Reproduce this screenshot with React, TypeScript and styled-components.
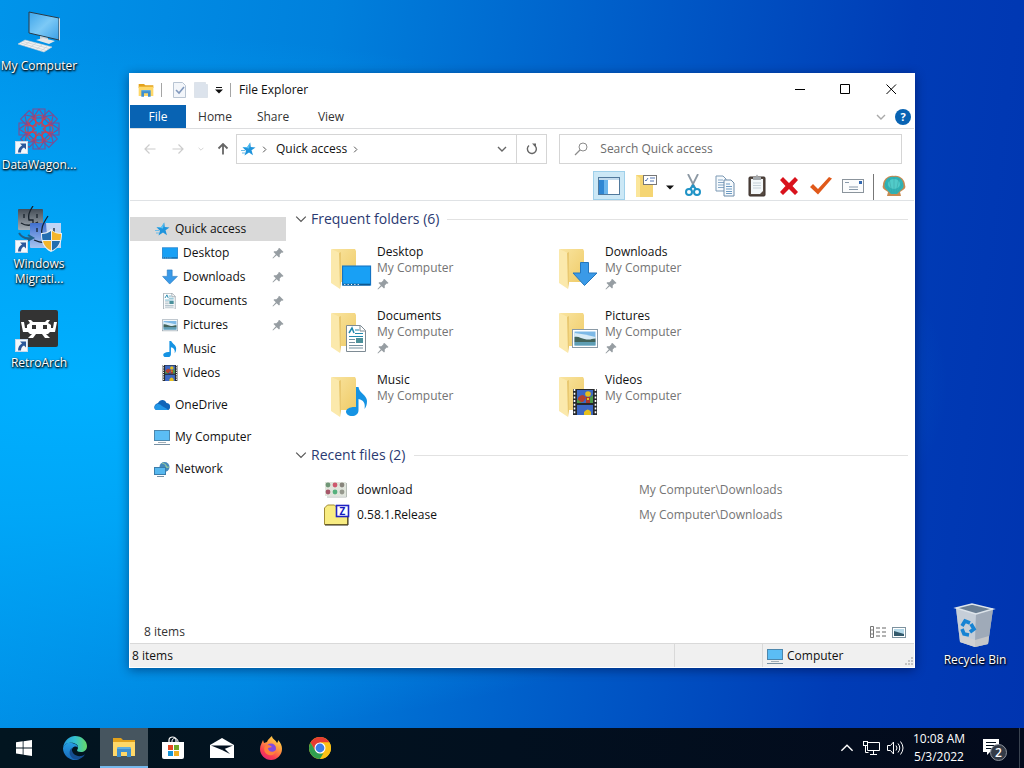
import { useState } from "react";
import type { ReactNode } from "react";
import styled, { createGlobalStyle } from "styled-components";

const GlobalStyle = createGlobalStyle`
    * {
        box-sizing: border-box;
    }
    body {
        margin: 0;
        font-family: "Open Sans", "Noto Sans", sans-serif;
        font-size: 12px;
        line-height: 16px;
        color: #111;
    }
    button, input {
        font: inherit;
        color: inherit;
    }
    button {
        border: 0;
        padding: 0;
        background: none;
    }
    svg {
        display: block;
        flex: none;
    }
`;

const Screen = styled.div`
    display: flex;
    flex-direction: column;
    height: 100vh;
    overflow: hidden;
    background:
        radial-gradient(ellipse at 8% 50%, #00b0ff 0%, rgba(0, 170, 250, 0.85) 25%, rgba(0, 120, 220, 0) 65%),
        linear-gradient(97deg, #0094ea 0%, #0080dc 30%, #0058c6 60%, #003cb6 82%, #0034b0 100%);
`;

const Desktop = styled.main`
    position: relative;
    flex: 1;
    display: flex;
    justify-content: space-between;
    min-height: 0;
`;

const IconColumn = styled.div<{ $end?: boolean }>`
    display: flex;
    flex-direction: column;
    justify-content: ${p => (p.$end ? "flex-end" : "flex-start")};
    padding: ${p => (p.$end ? "0 10px 35px 0" : "0")};
`;

const Shortcut = styled.button`
    display: flex;
    flex-direction: column;
    align-items: center;
    gap: 2px;
    width: 78px;
    height: 99px;
    padding-top: 8px;
    color: #fff;
    line-height: 15px;
    text-shadow: 1px 1px 2px #000, 0 1px 2px #000;
    span {
        white-space: pre-line;
    }
`;

const Window = styled.section`
    position: absolute;
    top: 73px;
    right: 109px;
    bottom: 60px;
    left: 129px;
    display: flex;
    flex-direction: column;
    background: #fff;
    border: 1px solid transparent;
    box-shadow: 0 2px 10px rgba(0, 0, 40, 0.45);
`;

const TitleBar = styled.header`
    display: flex;
    align-items: center;
    height: 31px;
    padding-left: 8px;
    h1 {
        flex: 1;
        margin: 0;
        padding-left: 3px;
        font-size: 12px;
        font-weight: 400;
    }
`;

const QuickButton = styled.button<{ $width: number }>`
    display: flex;
    justify-content: center;
    width: ${p => p.$width}px;
`;

const Divider = styled.span<{ $height: number; $gap: number; $color: string }>`
    width: 1px;
    height: ${p => p.$height}px;
    margin: 0 ${p => p.$gap}px;
    background: ${p => p.$color};
`;

const ControlButton = styled.button`
    display: flex;
    align-items: center;
    justify-content: center;
    width: 46px;
    height: 30px;
`;

const Ribbon = styled.nav`
    display: flex;
    align-items: center;
    height: 24px;
    padding-right: 3px;
    border-bottom: 1px solid #dcdddf;
`;

const RibbonTab = styled.button<{ $file?: boolean }>`
    width: ${p => (p.$file ? 56 : 58)}px;
    height: 23px;
    background: ${p => (p.$file ? "#0863b3" : "transparent")};
    color: ${p => (p.$file ? "#fff" : "#333")};
`;

const RibbonEnd = styled.div`
    display: flex;
    align-items: center;
    gap: 9px;
    margin-left: auto;
`;

const AddressRow = styled.div`
    display: flex;
    height: 35px;
    padding: 5px 12px 0 6px;
`;

const NavButton = styled.button<{ $width: number }>`
    display: flex;
    align-items: center;
    justify-content: center;
    width: ${p => p.$width}px;
`;

const AddressBox = styled.div`
    flex: 15 1 0;
    display: flex;
    align-items: center;
    border: 1px solid #d5d5d5;
    padding-left: 3px;
`;

const Crumb = styled.button`
    padding: 0 8px 0 5px;
`;

const Dropdown = styled.button`
    display: flex;
    justify-content: center;
    width: 28px;
    margin-left: auto;
`;

const Refresh = styled.button`
    display: flex;
    align-items: center;
    justify-content: center;
    align-self: stretch;
    width: 30px;
    border-left: 1px solid #d5d5d5;
`;

const SearchBox = styled.label`
    flex: 16 1 0;
    display: flex;
    align-items: center;
    gap: 12px;
    margin-left: 12px;
    padding-left: 14px;
    border: 1px solid #d5d5d5;
    input {
        flex: 1;
        min-width: 0;
        padding: 0;
        border: 0;
        outline: 0;
        background: none;
    }
    input::placeholder {
        color: #6d6d6d;
        opacity: 1;
    }
`;

const Toolbar = styled.div`
    display: flex;
    align-items: flex-end;
    justify-content: flex-end;
    height: 37px;
    padding-right: 4px;
    border-bottom: 1px solid #dfe2e5;
`;

const ToolButton = styled.button<{ $active?: boolean; $narrow?: boolean }>`
    display: flex;
    align-items: center;
    justify-content: center;
    width: ${p => (p.$narrow ? 15 : 32)}px;
    height: 29px;
    margin-right: ${p => (p.$active ? 5 : 0)}px;
    background: ${p => (p.$active ? "#cce8f6" : "transparent")};
    border: ${p => (p.$active ? "1px solid #9fd0ea" : "0")};
`;

const Body = styled.div`
    flex: 1;
    display: flex;
    min-height: 0;
`;

const SideNav = styled.nav`
    width: 156px;
    padding-top: 16px;
`;

const SideGroup = styled.div`
    margin-bottom: 8px;
`;

const SideItem = styled.a<{ $child?: boolean; $selected?: boolean }>`
    display: flex;
    align-items: center;
    gap: 5px;
    height: 24px;
    padding: 0 2px 0 ${p => (p.$child ? 32 : 24)}px;
    background: ${p => (p.$selected ? "#d9d9d9" : "transparent")};
    color: inherit;
    text-decoration: none;
    span {
        flex: 1;
        white-space: nowrap;
    }
`;

const Content = styled.div`
    flex: 1;
    min-width: 0;
    padding: 6px 6px 0 9px;
    overflow: hidden;
`;

const SectionTitle = styled.h2`
    display: flex;
    align-items: center;
    gap: 8px;
    height: 24px;
    margin: 0;
    font-size: 14px;
    font-weight: 400;
    color: #2b3a72;
    button {
        display: flex;
        align-items: center;
        gap: 4px;
    }
    &::after {
        content: "";
        flex: 1;
        height: 1px;
        background: #e2e2e2;
    }
`;

const FolderGrid = styled.div`
    display: grid;
    grid-template-columns: repeat(auto-fill, 228px);
    grid-auto-rows: 64px;
    padding: 13px 0 0 32px;
    margin-bottom: 7px;
`;

const FolderTile = styled.button`
    display: flex;
    align-items: flex-start;
    gap: 2px;
    text-align: left;
`;

const FolderText = styled.span`
    display: flex;
    flex-direction: column;
    small {
        font-size: 12px;
        color: #747474;
    }
    svg {
        margin-top: 2px;
    }
`;

const RecentTable = styled.table`
    width: 100%;
    margin-top: 10px;
    border-collapse: collapse;
    table-layout: fixed;
    tr {
        height: 25px;
    }
    td {
        padding: 0;
        color: #747474;
    }
    td:first-child {
        width: 344px;
        padding-left: 29px;
        color: #111;
    }
`;

const FileName = styled.span`
    display: flex;
    align-items: center;
    gap: 7px;
`;

const InfoBar = styled.div`
    display: flex;
    align-items: center;
    gap: 6px;
    height: 24px;
    padding: 2px 8px 0 14px;
    color: #333;
    span {
        flex: 1;
    }
`;

const StatusBar = styled.footer`
    display: flex;
    height: 24px;
    background: #f0f0f0;
    border-top: 1px solid #d9d9d9;
`;

const StatusCell = styled.div<{ $width?: number }>`
    flex: ${p => (p.$width ? `0 0 ${p.$width}px` : "1")};
    display: flex;
    align-items: center;
    gap: 4px;
    padding-left: ${p => (p.$width ? 4 : 2)}px;
    border-right: 1px solid #d9d9d9;
    span {
        flex: 1;
    }
    &:last-child {
        align-items: center;
        border-right: 0;
    }
`;

const Grip = styled.span`
    && {
        flex: none;
        align-self: flex-end;
        padding: 0 1px 1px 0;
    }
`;

const Taskbar = styled.footer`
    display: flex;
    align-items: stretch;
    gap: 1px;
    height: 40px;
    background: linear-gradient(90deg, #021520, #02101f 50%, #030a1c);
    color: #fff;
`;

const TaskButton = styled.button<{ $active?: boolean; $start?: boolean }>`
    display: flex;
    align-items: center;
    justify-content: center;
    width: ${p => (p.$start ? 50 : 48)}px;
    padding-right: ${p => (p.$start ? 2 : 0)}px;
    background: ${p => (p.$active ? "#46555f" : "transparent")};
    border-bottom: ${p => (p.$active ? "2px solid #76b9ed" : "0")};
`;

const Tray = styled.div`
    display: flex;
    align-items: center;
    gap: 4px;
    margin-left: auto;
`;

const TrayButton = styled.button<{ $width: number }>`
    display: flex;
    align-items: center;
    justify-content: center;
    width: ${p => p.$width}px;
    height: 40px;
`;

const Clock = styled.time`
    display: flex;
    flex-direction: column;
    width: 60px;
    line-height: 18px;
    text-align: center;
    white-space: nowrap;
`;

const ShowDesktop = styled.button`
    width: 5px;
    height: 40px;
    border-left: 1px solid #3a4350;
`;

/* ---------- icons ---------- */

const Arrow = () => (
    <g>
        <rect x="0.5" y="34.5" width="12" height="12" fill="#f4f8fc" stroke="#c7d8ea" />
        <path d="M5 36.5h6v6l-2-2c-2 1-3 2.500-3 5H3c0-3.500 1.500-5.500 4-7z" fill="#2b579a" />
    </g>
);

const BigComputer = () => (
    <svg width="48" height="48" viewBox="0 0 48 48">
        <defs>
            <linearGradient id="screen" x1="0" y1="0" x2="1" y2="1">
                <stop offset="0" stopColor="#3da4ea" />
                <stop offset="0.5" stopColor="#7cc9f6" />
                <stop offset="1" stopColor="#3a9fe6" />
            </linearGradient>
        </defs>
        <path d="M14 4l30 6v22l-30-7z" fill="url(#screen)" stroke="#2a3b48" />
        <path d="M44 10l1 .5v22l-1-.5z" fill="#d7dde2" />
        <path d="M25 28l8 2v3h-8z" fill="#c8ced3" />
        <path d="M21 32l7-2 12 3-6 3z" fill="#e3e6e8" />
        <path d="M10 32l27 7-8 5L3 36z" fill="#f2f3f4" stroke="#c9cfd3" strokeWidth="0.6" />
        <path d="M8 33.500l26 7M6 35l25 7.500M15 33.500l-6 4M21 35l-6 4.500M27 37l-6 4.500M32 38.500l-6 4.500" stroke="#ccd2d6" strokeWidth="0.8" />
    </svg>
);

const DataWagon = () => (
    <svg width="48" height="48" viewBox="0 0 48 48">
        <g fill="none" stroke="#7a4f93" strokeWidth="1.1">
            {[0, 45, 90, 135, 180, 225, 270, 315].map(a => (
                <g key={a} transform={`rotate(${a} 24 22)`}>
                    <path d="M18 2h12v9H18zM18 11l6-9 6 9" />
                    <path d="M16 9l8 9 8-9" stroke="#a84c70" />
                    <circle cx="24" cy="12" r="4" stroke="#d0404c" />
                </g>
            ))}
        </g>
        <Arrow />
    </svg>
);

const Migration = () => (
    <svg width="48" height="48" viewBox="0 0 48 48">
        <defs>
            <linearGradient id="gray" x1="0" y1="0" x2="0" y2="1">
                <stop offset="0" stopColor="#444d57" />
                <stop offset="1" stopColor="#a5adb5" />
            </linearGradient>
            <linearGradient id="finder" x1="0" y1="0" x2="0" y2="1">
                <stop offset="0" stopColor="#3f6fd0" />
                <stop offset="1" stopColor="#a9c4f0" />
            </linearGradient>
        </defs>
        <rect x="3" y="3" width="25" height="21" rx="1" fill="url(#gray)" />
        <path d="M9 8v4M22 8v4M6 17q8 5 17-1M18 0c-4 6-5 9-4 14h4v8" fill="none" stroke="#17212b" strokeWidth="1.3" />
        <rect x="15" y="17" width="31" height="25" rx="1" fill="url(#finder)" />
        <path d="M31 17h15v25H33z" fill="#bfd4f5" />
        <path d="M22 22v4M39 22v4M19 34q11 5 17 0M33 10c-6 9-7 13-6 19h5v13" fill="none" stroke="#152334" strokeWidth="1.3" />
        <path d="M4 27c3 5 7 6 12 5M13 29l5 3-6 3" fill="none" stroke="#20628a" strokeWidth="2" />
        <path d="M36 23c3 3 6 4 11 4 0 9-2 15-11 19-8-4-10-10-10-19 4 0 7-1 10-4z" fill="#e9f0f5" />
        <path d="M36 25v9h-8.500c-.5-2-.5-4-.5-6 4 0 6-1 9-3zM37 35h8c-1 4-3 7-8 9.500z" fill="#236eb0" />
        <path d="M37 25v9h8.500c.5-2 .5-4 .5-6-4 0-6-1-9-3zM36 35h-8c1 4 3 7 8 9.500z" fill="#f4b52c" />
        <Arrow />
    </svg>
);

const RetroArch = () => (
    <svg width="48" height="48" viewBox="0 0 48 48">
        <rect x="5" y="5" width="38" height="37" rx="2" fill="#333" />
        <path
            d="M13 15h3l2 2h12l2-2h3l-2 3 3 2v3h2l1-6h3l-2 10h-5l-2 2h-2l4 4h-5l-3-4h-6l-3 4h-5l4-4h-2l-2-2H8L6 17h3l1 6h2v-3l3-2z"
            fill="#fff"
        />
        <path d="M17 20h4v4h-4zM28 20h4v4h-4z" fill="#333" />
        <Arrow />
    </svg>
);

const RecycleBin = () => (
    <svg width="48" height="48" viewBox="0 0 48 48">
        <path d="M5 6l16-4 21 5-5 35-13 3-15-5z" fill="#a9b7c6" />
        <path d="M5 6l20 6-1 33-15-5z" fill="#c5ced8" />
        <path d="M25 12l17-5-5 35-13 3z" fill="#9faab8" />
        <path d="M5 6l16-4 21 5-17 5z" fill="#6b7f93" stroke="#dde4ea" strokeWidth="1.4" />
        <path d="M9 33l15 5 14-4-1 8-13 3-15-5z" fill="#d6d3d0" opacity="0.7" />
        <g fill="none" stroke="#1683d3" strokeWidth="3.6">
            <path d="M11 24l3-5 5 2" />
            <path d="M20 22l3 5-4 3" />
            <path d="M11 27l2 5 5 1" />
        </g>
    </svg>
);

const ExplorerIcon = ({ size = 16 }: { size?: number }) => (
    <svg width={size} height={size} viewBox="0 0 24 24">
        <path d="M1 3h8l2 2h12v4H1z" fill="#e3a21c" />
        <path d="M1 7h22v14H1z" fill="#ffd868" />
        <path d="M5 22v-8q0-2 2-2h10q2 0 2 2v8h-4v-5H9v5z" fill="#3f8fce" />
        <path d="M5 14q0-2 2-2h10q2 0 2 2z" fill="#61aee0" />
    </svg>
);

const PropertiesIcon = ({ checked }: { checked?: boolean }) => (
    <svg width="14" height="16" viewBox="0 0 14 16">
        <path d={checked ? "M1.5.5h9l3 3v12h-12z" : "M.5.5h11v2h2v13H.5z"} fill={checked ? "#f3f6fa" : "#dce3ec"} stroke={checked ? "#b9c5d3" : "#dde3ea"} />
        {checked && <path d="M4 8l3 3 5-6" fill="none" stroke="#8299bd" strokeWidth="1.6" />}
    </svg>
);

const Triangle = ({ bar }: { bar?: boolean }) => (
    <svg width="8" height="8" viewBox="0 0 8 8">
        {bar && <path d="M1 1h6v1H1z" fill="#111" />}
        <path d="M0 3.500h8L4 7.500z" fill="#111" />
    </svg>
);

const Chevron = ({ color, width = 10, turn = 0 }: { color: string; width?: number; turn?: number }) => (
    <svg width={width} height={width} viewBox="0 0 10 10">
        <path d="M1 3l4 4 4-4" transform={`rotate(${turn} 5 5)`} fill="none" stroke={color} strokeWidth={width > 10 ? 1 : 1.4} />
    </svg>
);

const Star = () => (
    <svg width="16" height="16" viewBox="0 0 16 16">
        <path d="M10.200 1.500l.6 4.500 4.700.5-4 2.700 1.500 5-4-2.700L4.500 14.500l1.500-4.700L2.500 6.300l4.800-.3z" fill="#1f94dc" />
        <path d="M10.200 1.500L9 7.500 2.500 6.300l4.800-.3z" fill="#5cc2f2" />
        <path d="M1 9.500h4M2 12h3" stroke="#6dbce8" />
    </svg>
);

const StraightArrow = ({ color, turn = 0, heavy }: { color: string; turn?: number; heavy?: boolean }) => (
    <svg width="12" height="12" viewBox="0 0 12 12">
        <path
            d="M11.500 6H1M5.500 1.500L1 6l4.500 4.500"
            transform={`rotate(${turn} 6 6)`}
            fill="none"
            stroke={color}
            strokeWidth={heavy ? 1.8 : 1.2}
        />
    </svg>
);

const RefreshIcon = () => (
    <svg width="12" height="12" viewBox="0 0 12 12">
        <path d="M3 2.500A4.500 4.500 0 1 0 8 2" fill="none" stroke="#666" strokeWidth="1.4" />
        <path d="M9.500 1h-4v4z" fill="#666" transform="rotate(90 8 3)" />
    </svg>
);

const SearchIcon = () => (
    <svg width="14" height="14" viewBox="0 0 14 14">
        <circle cx="9" cy="5" r="4" fill="none" stroke="#8b8b8b" />
        <path d="M6 8l-5 5" stroke="#8b8b8b" strokeWidth="1.2" />
    </svg>
);

const HelpIcon = () => (
    <svg width="16" height="16" viewBox="0 0 16 16">
        <circle cx="8" cy="8" r="8" fill="#0863b3" />
        <text x="8" y="12" textAnchor="middle" fontSize="11" fontWeight="700" fill="#fff">?</text>
    </svg>
);

const PaneIcon = () => (
    <svg width="22" height="18" viewBox="0 0 22 18">
        <rect x="0.5" y="0.5" width="21" height="17" fill="#fff" stroke="#51799c" />
        <path d="M1 1h20v2H1z" fill="#c4dcee" />
        <path d="M1 3h9v14H1z" fill="#2f86d3" />
        <path d="M6 3h4v14H6z" fill="#6bb5ec" />
    </svg>
);

const FolderOptions = () => (
    <svg width="22" height="24" viewBox="0 0 22 24">
        <path d="M1 1h8v3h9v19H1z" fill="#f5d573" />
        <path d="M1 1l4 3v19H1z" fill="#fbe69b" />
        <rect x="8.5" y="1.5" width="13" height="9" fill="#fff" stroke="#777" />
        <path d="M10 6l1 1 2-3M15 4h5M15 7h4" fill="none" stroke="#5577b5" />
    </svg>
);

const Scissors = () => (
    <svg width="18" height="23" viewBox="0 0 18 23">
        <path d="M4 0l7 14M14 0L7 14" stroke="#8c98a3" strokeWidth="1.8" />
        <circle cx="5" cy="18" r="3" fill="none" stroke="#1f93c6" strokeWidth="2" />
        <circle cx="13" cy="18" r="3" fill="none" stroke="#1f93c6" strokeWidth="2" />
        <path d="M6 15l4-4M12 15l-4-4" stroke="#1f93c6" strokeWidth="2" />
    </svg>
);

const CopyIcon = () => (
    <svg width="20" height="22" viewBox="0 0 20 22">
        <path d="M1 1h7l3 3v12H1z" fill="#f6fafd" stroke="#7c99b4" />
        <path d="M3 5h5M3 7.500h6M3 10h6M3 12.500h6" stroke="#87a8c6" />
        <path d="M9 5h7l3 3v13H9z" fill="#f6fafd" stroke="#6c8ba8" />
        <path d="M11 9h4M11 11.500h6M11 14h6M11 16.500h6M11 18.500h6" stroke="#6d9ac2" />
    </svg>
);

const PasteIcon = () => (
    <svg width="18" height="23" viewBox="0 0 18 23">
        <rect x="1" y="3" width="16" height="19" rx="1" fill="#564a42" stroke="#382f2a" />
        <path d="M3 5h12v12l-3 3H3z" fill="#f4f8fa" />
        <path d="M5 9h8M5 11.500h8M5 14h8" stroke="#c5d0d7" />
        <path d="M5 3h3q0-2.500 1-2.500T10 3h3v3H5z" fill="#a3a8ac" />
    </svg>
);

const DeleteIcon = () => (
    <svg width="20" height="20" viewBox="0 0 20 20">
        <path d="M4 1l6 6 6-6 3 3-5.500 6L19 16l-3 3-6-6-6 6-3-3 5.500-6L1 4z" fill="#d9121c" />
    </svg>
);

const CheckIcon = () => (
    <svg width="24" height="20" viewBox="0 0 24 20">
        <path d="M1 11l3-3 5 5L20 1l3 1.500L9 18.500z" fill="#e0591a" />
    </svg>
);

const EnvelopeIcon = () => (
    <svg width="22" height="14" viewBox="0 0 22 14">
        <rect x="0.5" y="0.5" width="21" height="13" fill="#fbfcfd" stroke="#8b949c" />
        <rect x="17" y="2" width="3" height="3" fill="#3368b0" />
        <path d="M3 3.500h4M7 8h9M7 10.500h9" stroke="#8899aa" />
    </svg>
);

const ShellIcon = () => (
    <svg width="24" height="22" viewBox="0 0 24 22">
        <path d="M12 1c6-1 11 4 11 9 1 2 0 4-2 5l-3 2 1 4H5l1-4-3-2c-2-1-3-3-2-5C1 5 6 0 12 1z" fill="#c98a50" />
        <path d="M12 2c6-1 9 3 9.500 8 .5 2-1 4-2.500 5l-4 4H9l-4-4c-1.500-1-3-3-2.500-5C3 5 6 1 12 2z" fill="#2fb3b6" />
        <ellipse cx="12" cy="9" rx="6" ry="5" fill="#5fd6d2" opacity="0.7" />
        <path d="M12 18V2M10 18L7 3M14 18l3-15M9 18L3 8M15 18l6-10" stroke="#3c9fa0" strokeWidth="0.5" />
    </svg>
);

const PinIcon = () => (
    <svg width="12" height="12" viewBox="0 0 12 12">
        <path d="M7.500 1l4 4-1 .8-.8-.2-2 2 .1 2.200-.8.700L4.700 8.200 1 11.500.5 11l3.300-3.700L1.500 5l.7-.8 2.200.1 2-2-.1-.8z" fill="#969da2" />
    </svg>
);

/* Glyphs on a 26x26 grid, used in the sidebar and over the large folders. */
const DesktopGlyph = () => (
    <g>
        <rect x="0.5" y="4.5" width="25" height="17" fill="#18a0f5" stroke="#1474c4" />
        <path d="M1 21h24" stroke="#0f588f" strokeWidth="1.5" />
        <path d="M2 21h15" stroke="#fff" strokeDasharray="1 2" />
    </g>
);

const DownloadGlyph = () => <path d="M8.500 1.500h8V12H25L12.500 24.500 1 12h7.500z" fill="#3a9ae8" stroke="#2577bd" />;

const DocumentGlyph = () => (
    <g>
        <path d="M2.500.5h14l5 5v21h-19z" fill="#fff" stroke="#7e8b94" />
        <path d="M16 .5V6h5.500" fill="none" stroke="#7e8b94" />
        <path d="M5 8l3-5 2 5" fill="none" stroke="#2389ae" strokeWidth="1.5" />
        <path d="M11 5h4M11 8.500h8M5 11.500h14" stroke="#2389ae" />
        <path d="M5 14.500h6M5 17.500h6M5 20.500h14M5 23h14" stroke="#7591a1" />
        <path d="M12 13h7v5h-7z" fill="#4b909a" />
    </g>
);

const PictureGlyph = () => (
    <g>
        <rect x="0.5" y="4.5" width="25" height="18" fill="#fff" stroke="#8b9aa6" />
        <path d="M2.500 6.500h21v14h-21z" fill="#7db9e6" />
        <path d="M2.500 8q10 1 21 4v3h-21z" fill="#d7ebf6" />
        <path d="M2.500 12c4-1 7 2 12 2.500s5-1 9-1V17h-21z" fill="#42635a" />
        <path d="M2.500 17h21v3.500h-21z" fill="#5e9eb4" />
    </g>
);

const MusicGlyph = () => (
    <path
        d="M12 -2h2.500c.5 6 8.500 8 8.500 14 0 4-1 6-2.500 8 1-6-1-9-6-10v11c0 4-3 6-6.500 6S2 25 2 22.500 6 17.500 12 18z"
        fill="#1593e3"
    />
);

const VideoGlyph = () => (
    <g>
        <path d="M1 0h24v26H1z" fill="#26282b" />
        <path d="M2.500 0v26M23.500 0v26" stroke="#fff" strokeWidth="1.6" strokeDasharray="2 1.7" />
        <path d="M5 1h16v13H5zM5 16h16v10H5z" fill="#3d68c4" />
        <path d="M6 9c3-4 6-4 8 0l-3 4H6z" fill="#b5402e" />
        <path d="M5 10l5 4H5zM16 10l5-4v8h-5z" fill="#4f9a49" />
        <circle cx="16" cy="5" r="2.8" fill="#e6c01e" />
        <path d="M14 8h4v6h-4z" fill="#a63a2e" />
        <path d="M15 9h2v2h-2zM12 23q4-5 7 0v3h-7z" fill="#e6c01e" />
    </g>
);

const Small = ({ children }: { children: ReactNode }) => (
    <svg width="16" height="16" viewBox="0 0 26 26">{children}</svg>
);

const LargeFolder = ({ children }: { children: ReactNode }) => (
    <svg width="48" height="48" viewBox="0 0 48 48">
        <defs>
            <linearGradient id="folder" x1="0" y1="0" x2="1" y2="1">
                <stop offset="0" stopColor="#f9e4a0" />
                <stop offset="1" stopColor="#efcb67" />
            </linearGradient>
        </defs>
        <path d="M5 5h23l1 2v31H12z" fill="url(#folder)" />
        <path d="M4 5l9 4v36l-9-6z" fill="#fbe9ac" />
        <path d="M12 9l2-1v31l-1 6z" fill="#e9c870" />
        {children}
    </svg>
);

const CloudIcon = () => (
    <svg width="16" height="16" viewBox="0 0 16 16">
        <path d="M4 6c2-4 7-4 8.500 0 5 0 4.500 7 1 7H3C-1 13-.5 7 4 6z" fill="#0f65b9" />
        <path d="M1 9c2-3 5-2 7 0l6 3.500-1 .5H3c-2 0-3-2-2-4z" fill="#2197e8" />
    </svg>
);

const MonitorIcon = () => (
    <svg width="16" height="16" viewBox="0 0 16 16">
        <rect x="0.5" y="1.5" width="15" height="10" fill="#5bbdf5" stroke="#4c87ad" />
        <path d="M4 13.500h8" stroke="#a2aeb7" />
        <path d="M0 15.500h16" stroke="#7790a3" />
    </svg>
);

const NetworkIcon = () => (
    <svg width="16" height="16" viewBox="0 0 16 16">
        <circle cx="10.5" cy="6" r="5" fill="#4489bb" />
        <path d="M8 2q4 1 4 3t3 1M9 9l4-4" stroke="#93c69b" strokeWidth="1.2" fill="none" />
        <rect x="0.5" y="6.5" width="11" height="7" fill="#57b8ef" stroke="#3a7dab" />
        <path d="M3 15.500h7" stroke="#7790a3" />
    </svg>
);

const ImageStrip = () => (
    <svg width="26" height="22" viewBox="0 0 26 22">
        <path d="M1 3h21v14H1z" fill="#e0e5dc" />
        <path d="M22.500 4v14H3" fill="none" stroke="#b5bcb6" />
        {["#5c8864", "#ca3f5b", "#78746b", "#9b3e55", "#3ca86c", "#888c80"].map((c, i) => (
            <circle key={c} cx={4 + (i % 3) * 7} cy={i < 3 ? 6 : 13} r="2.4" fill={c} opacity="0.85" />
        ))}
    </svg>
);

const ZipIcon = () => (
    <svg width="26" height="22" viewBox="0 0 26 22">
        <path d="M1.500 3l2-2h7l2 2h11v17.500h-23V4z" fill="#f8ec82" stroke="#a18c35" />
        <path d="M1 21h23V5" fill="none" stroke="#302d1d" />
        <rect x="12.5" y="1.5" width="12" height="11" fill="#fff" stroke="#2023c4" strokeWidth="1.6" />
        <text x="18.5" y="11" textAnchor="middle" fontSize="10" fontWeight="700" fill="#161cc0">Z</text>
    </svg>
);

const DetailsIcon = () => (
    <svg width="16" height="12" viewBox="0 0 16 12">
        <path d="M.5.5h3v11h-3zM.5 4h3M.5 8h3" fill="none" stroke="#777" />
        <path d="M6 2h4M12 2h4M6 6h4M12 6h4M6 10h4M12 10h4" stroke="#666" />
    </svg>
);

const ThumbsIcon = () => (
    <svg width="14" height="11" viewBox="0 0 14 11">
        <rect x="0.5" y="0.5" width="13" height="10" fill="#fff" stroke="#7d929f" />
        <path d="M2 2h10v7H2z" fill="#b5d9e9" />
        <path d="M2 4l10 3v2H2z" fill="#33596b" />
    </svg>
);

const GripIcon = () => (
    <svg width="9" height="9" viewBox="0 0 9 9">
        <path d="M7 0h2v2H7zM4 3h2v2H4zM7 3h2v2H7zM1 6h2v2H1zM4 6h2v2H4zM7 6h2v2H7z" fill="#c4c4c4" />
    </svg>
);

const WindowsLogo = () => (
    <svg width="16" height="16" viewBox="0 0 16 16">
        <path d="M0 2.300l6.700-1v6.200H0zM7.500 1.200L16 0v7.500H7.500zM0 8.400h6.700v6.200l-6.700-1zM7.500 8.400H16V16l-8.500-1.200z" fill="#fff" />
    </svg>
);

const EdgeLogo = () => (
    <svg width="24" height="24" viewBox="0 0 24 24">
        <defs>
            <linearGradient id="edgeTop" x1="0" y1="0" x2="1" y2="0">
                <stop offset="0" stopColor="#2497df" />
                <stop offset="0.5" stopColor="#34c1d0" />
                <stop offset="1" stopColor="#67d866" />
            </linearGradient>
            <linearGradient id="edgeLeft" x1="0" y1="0" x2="0" y2="1">
                <stop offset="0" stopColor="#259ee4" />
                <stop offset="1" stopColor="#1766b8" />
            </linearGradient>
        </defs>
        <path d="M0 12C1 4 7 0 12 0c7 0 12 5 12 10 0 4-3 6-6 6-3 0-4-1-4-2 1-1 1-2 1-3 0-3-5-5-9-4-3 .5-5 2-6 5z" fill="url(#edgeTop)" />
        <path d="M0 12c1-4 5-6 9-5 4 .5 6 2.500 6 5-1-2-4-2-5.500 0-3 5 2 11 7 12C8 26 0 20 0 12z" fill="url(#edgeLeft)" />
        <path d="M9 12c-1 5 4 9 9 8 2-.4 3-1.300 4-1.800C19 24 10 26 7 19c-1-3 0-6 2-7z" fill="#154d91" />
    </svg>
);

const StoreLogo = () => (
    <svg width="24" height="24" viewBox="0 0 24 24">
        <path d="M8 7V4c0-4 7-4 7 0v3" fill="none" stroke="#fff" strokeWidth="1.2" />
        <path d="M11 7V5c0-3 5-4 6 0v2" fill="none" stroke="#fff" />
        <path d="M1 6h22v15q0 2-2 2H3q-2 0-2-2z" fill="#fff" />
        <path d="M7 9h5v5H7z" fill="#e34824" />
        <path d="M13 9h5v5h-5z" fill="#72a928" />
        <path d="M7 15h5v5H7z" fill="#1595d8" />
        <path d="M13 15h5v5h-5z" fill="#f0af22" />
    </svg>
);

const MailLogo = () => (
    <svg width="24" height="22" viewBox="0 0 24 22">
        <path d="M12 1l12 7v13H0V8z" fill="#fff" />
        <path d="M1 8.500h22L12 13z" fill="#02101f" />
        <path d="M14 11l6 6-8-4z" fill="#02101f" />
    </svg>
);

const FirefoxLogo = () => (
    <svg width="24" height="24" viewBox="0 0 24 24">
        <defs>
            <linearGradient id="fox" x1="0.8" y1="0" x2="0.2" y2="1">
                <stop offset="0" stopColor="#ffe14a" />
                <stop offset="0.4" stopColor="#ff9640" />
                <stop offset="0.75" stopColor="#fa3c52" />
                <stop offset="1" stopColor="#e12576" />
            </linearGradient>
        </defs>
        <path d="M4 4l1 3 3-1c1-3 3-4 5-6 0 3 4 4 5 7 1-1 1-2 1-3 3 3 4 6 4 9 0 6-5 11-11 11S1 19 1 13c0-4 2-6 3-9z" fill="url(#fox)" />
        <circle cx="12" cy="12.5" r="5" fill="#824adf" />
        <path d="M6 10c3-2 5-1 7 1l-4 1c0 4 5 5 8 2 0 4-4 6-7 5-4-1-6-5-4-9z" fill="#ff7f3d" />
    </svg>
);

const ChromeLogo = () => (
    <svg width="24" height="24" viewBox="0 0 24 24">
        <circle cx="12" cy="12" r="11" fill="#fbc116" />
        <path d="M2.500 6.500A11 11 0 0 1 21.500 6.500H12L7.200 14.700z" fill="#e63c32" />
        <path d="M2.500 6.500l4.800 8.300L12 17.500h4.800L12 23A11 11 0 0 1 2.500 6.500z" fill="#30a04f" />
        <path d="M12 6.500h9.500A11 11 0 0 1 12 23l4.800-8z" fill="#fbc116" />
        <circle cx="12" cy="12" r="5.500" fill="#fff" />
        <circle cx="12" cy="12" r="4.400" fill="#3b7de8" />
    </svg>
);

const NetworkTray = () => (
    <svg width="17" height="16" viewBox="0 0 17 16">
        <path d="M4.500 2.500h12v8h-12zM7 14.500h7M10.500 11v3M2.500 6v6.500h3" fill="none" stroke="#fff" />
        <rect x="0.5" y="1.5" width="4" height="4" fill="#02101f" stroke="#fff" />
    </svg>
);

const SpeakerTray = () => (
    <svg width="17" height="14" viewBox="0 0 17 14">
        <path d="M.5 4.500h3l3-3.500v12l-3-3.500h-3z" fill="none" stroke="#fff" />
        <path d="M9 4.500q2 2.500 0 5M11 2.500q3.500 4.500 0 9M13.500.5q5 6.500 0 13" fill="none" stroke="#fff" />
    </svg>
);

const ActionCenter = () => (
    <svg width="26" height="26" viewBox="0 0 26 26">
        <path d="M2 4h16v13H9l-3 3v-3H2z" fill="#fff" />
        <path d="M5 7.500h10M5 10.500h10M5 13.500h7" stroke="#02101f" />
        <circle cx="17.5" cy="17.5" r="8" fill="#343b47" stroke="#8d929b" />
        <text x="17.5" y="22" textAnchor="middle" fontSize="12" fontWeight="600" fill="#fff">2</text>
    </svg>
);

/* ---------- data ---------- */

const shortcuts = [
    { label: "My Computer", icon: <BigComputer /> },
    { label: "DataWagon...", icon: <DataWagon /> },
    { label: "Windows\nMigrati...", icon: <Migration /> },
    { label: "RetroArch", icon: <RetroArch /> },
];

const places = [
    { name: "Desktop", glyph: <DesktopGlyph />, pinned: true },
    { name: "Downloads", glyph: <DownloadGlyph />, pinned: true },
    { name: "Documents", glyph: <DocumentGlyph />, pinned: true },
    { name: "Pictures", glyph: <PictureGlyph />, pinned: true },
    { name: "Music", glyph: <MusicGlyph />, pinned: false },
    { name: "Videos", glyph: <VideoGlyph />, pinned: false },
];

const roots = [
    { name: "OneDrive", icon: <CloudIcon /> },
    { name: "My Computer", icon: <MonitorIcon /> },
    { name: "Network", icon: <NetworkIcon /> },
];

const recent = [
    { name: "download", icon: <ImageStrip /> },
    { name: "0.58.1.Release", icon: <ZipIcon /> },
];

const tools = [
    { name: "Cut", icon: <Scissors /> },
    { name: "Copy", icon: <CopyIcon /> },
    { name: "Paste", icon: <PasteIcon /> },
    { name: "Delete", icon: <DeleteIcon /> },
    { name: "Properties", icon: <CheckIcon /> },
    { name: "E-mail", icon: <EnvelopeIcon /> },
];

const apps = [
    { name: "Edge", icon: <EdgeLogo /> },
    { name: "File Explorer", icon: <ExplorerIcon size={24} /> },
    { name: "Store", icon: <StoreLogo /> },
    { name: "Mail", icon: <MailLogo /> },
    { name: "Firefox", icon: <FirefoxLogo /> },
    { name: "Chrome", icon: <ChromeLogo /> },
];

function Explorer() {
    const [query, setQuery] = useState("");
    const [foldersOpen, setFoldersOpen] = useState(true);
    const [filesOpen, setFilesOpen] = useState(true);

    return (
        <Window>
            <TitleBar>
                <ExplorerIcon />
                <Divider $height={14} $gap={7} $color="#a5a5a5" />
                <QuickButton $width={20} aria-label="Properties"><PropertiesIcon checked /></QuickButton>
                <QuickButton $width={24} aria-label="New folder"><PropertiesIcon /></QuickButton>
                <QuickButton $width={12} aria-label="Customize"><Triangle bar /></QuickButton>
                <Divider $height={14} $gap={5} $color="#a5a5a5" />
                <h1>File Explorer</h1>
                <ControlButton aria-label="Minimize">
                    <svg width="11" height="11"><path d="M1 5.500h10" stroke="#000" /></svg>
                </ControlButton>
                <ControlButton aria-label="Maximize">
                    <svg width="11" height="11"><path d="M.5.5h9v9h-9z" fill="none" stroke="#000" /></svg>
                </ControlButton>
                <ControlButton aria-label="Close">
                    <svg width="11" height="11"><path d="M.5.5l9.500 9.500M10 .5L.5 10" stroke="#000" /></svg>
                </ControlButton>
            </TitleBar>
            <Ribbon>
                <RibbonTab $file>File</RibbonTab>
                <RibbonTab>Home</RibbonTab>
                <RibbonTab>Share</RibbonTab>
                <RibbonTab>View</RibbonTab>
                <RibbonEnd>
                    <button aria-label="Expand ribbon"><Chevron color="#a9a9a9" /></button>
                    <button aria-label="Help"><HelpIcon /></button>
                </RibbonEnd>
            </Ribbon>
            <AddressRow>
                <NavButton $width={28} aria-label="Back"><StraightArrow color="#ccc" /></NavButton>
                <NavButton $width={28} aria-label="Forward"><StraightArrow color="#ccc" turn={180} /></NavButton>
                <NavButton $width={18} aria-label="Recent locations"><Chevron color="#ccc" width={6} /></NavButton>
                <NavButton $width={26} aria-label="Up"><StraightArrow color="#666" turn={90} heavy /></NavButton>
                <AddressBox>
                    <Star />
                    <Crumb aria-label="Locations"><Chevron color="#555" width={7} turn={-90} /></Crumb>
                    <button>Quick access</button>
                    <Crumb aria-label="Folders"><Chevron color="#555" width={7} turn={-90} /></Crumb>
                    <Dropdown aria-label="Previous locations"><Chevron color="#666" /></Dropdown>
                    <Refresh aria-label="Refresh"><RefreshIcon /></Refresh>
                </AddressBox>
                <SearchBox>
                    <SearchIcon />
                    <input
                        aria-label="Search Quick access"
                        placeholder="Search Quick access"
                        value={query}
                        onChange={e => setQuery(e.target.value)}
                    />
                </SearchBox>
            </AddressRow>
            <Toolbar>
                <ToolButton $active aria-label="Navigation pane"><PaneIcon /></ToolButton>
                <ToolButton aria-label="Folder options"><FolderOptions /></ToolButton>
                <ToolButton $narrow aria-label="More folder options"><Triangle /></ToolButton>
                {tools.map(t => (
                    <ToolButton key={t.name} aria-label={t.name}>{t.icon}</ToolButton>
                ))}
                <Divider $height={26} $gap={4} $color="#777" />
                <ToolButton aria-label="Classic Shell"><ShellIcon /></ToolButton>
            </Toolbar>
            <Body>
                <SideNav>
                    <SideGroup>
                        <SideItem href="#quick" $selected>
                            <Star />
                            <span>Quick access</span>
                        </SideItem>
                        {places.map(p => (
                            <SideItem key={p.name} href={`#${p.name}`} $child>
                                <Small>{p.glyph}</Small>
                                <span>{p.name}</span>
                                {p.pinned && <PinIcon />}
                            </SideItem>
                        ))}
                    </SideGroup>
                    {roots.map(r => (
                        <SideGroup key={r.name}>
                            <SideItem href={`#${r.name}`}>
                                {r.icon}
                                <span>{r.name}</span>
                            </SideItem>
                        </SideGroup>
                    ))}
                </SideNav>
                <Content>
                    <SectionTitle>
                        <button onClick={() => setFoldersOpen(!foldersOpen)}>
                            <Chevron color="#555" width={12} />
                            Frequent folders (6)
                        </button>
                    </SectionTitle>
                    {foldersOpen && (
                        <FolderGrid>
                            {places.map(p => (
                                <FolderTile key={p.name}>
                                    <LargeFolder>
                                        <g transform={p.name === "Desktop" ? "translate(15 17) scale(1.12)" : "translate(17 17)"}>{p.glyph}</g>
                                    </LargeFolder>
                                    <FolderText>
                                        {p.name}
                                        <small>My Computer</small>
                                        {p.pinned && <PinIcon />}
                                    </FolderText>
                                </FolderTile>
                            ))}
                        </FolderGrid>
                    )}
                    <SectionTitle>
                        <button onClick={() => setFilesOpen(!filesOpen)}>
                            <Chevron color="#555" width={12} />
                            Recent files (2)
                        </button>
                    </SectionTitle>
                    {filesOpen && (
                        <RecentTable>
                            <tbody>
                                {recent.map(f => (
                                    <tr key={f.name}>
                                        <td><FileName>{f.icon}{f.name}</FileName></td>
                                        <td>My Computer\Downloads</td>
                                    </tr>
                                ))}
                            </tbody>
                        </RecentTable>
                    )}
                </Content>
            </Body>
            <InfoBar>
                <span>8 items</span>
                <button aria-label="Details view"><DetailsIcon /></button>
                <button aria-label="Thumbnail view"><ThumbsIcon /></button>
            </InfoBar>
            <StatusBar>
                <StatusCell>8 items</StatusCell>
                <StatusCell $width={88} />
                <StatusCell $width={151}>
                    <MonitorIcon />
                    <span>Computer</span>
                    <Grip><GripIcon /></Grip>
                </StatusCell>
            </StatusBar>
        </Window>
    );
}

function App() {
    return (
        <Screen>
            <GlobalStyle />
            <Desktop>
                <IconColumn>
                    {shortcuts.map(s => (
                        <Shortcut key={s.label}>
                            {s.icon}
                            <span>{s.label}</span>
                        </Shortcut>
                    ))}
                </IconColumn>
                <Explorer />
                <IconColumn $end>
                    <Shortcut>
                        <RecycleBin />
                        <span>Recycle Bin</span>
                    </Shortcut>
                </IconColumn>
            </Desktop>
            <Taskbar>
                <TaskButton $start aria-label="Start"><WindowsLogo /></TaskButton>
                {apps.map(a => (
                    <TaskButton key={a.name} aria-label={a.name} $active={a.name === "File Explorer"}>
                        {a.icon}
                    </TaskButton>
                ))}
                <Tray>
                    <TrayButton $width={20} aria-label="Show hidden icons"><Chevron color="#fff" width={14} turn={180} /></TrayButton>
                    <TrayButton $width={20} aria-label="Network"><NetworkTray /></TrayButton>
                    <TrayButton $width={20} aria-label="Volume"><SpeakerTray /></TrayButton>
                    <Clock>
                        <span>10:08 AM</span>
                        <span>5/3/2022</span>
                    </Clock>
                    <TrayButton $width={42} aria-label="Notifications"><ActionCenter /></TrayButton>
                    <ShowDesktop aria-label="Show desktop" />
                </Tray>
            </Taskbar>
        </Screen>
    );
}

export default App;
